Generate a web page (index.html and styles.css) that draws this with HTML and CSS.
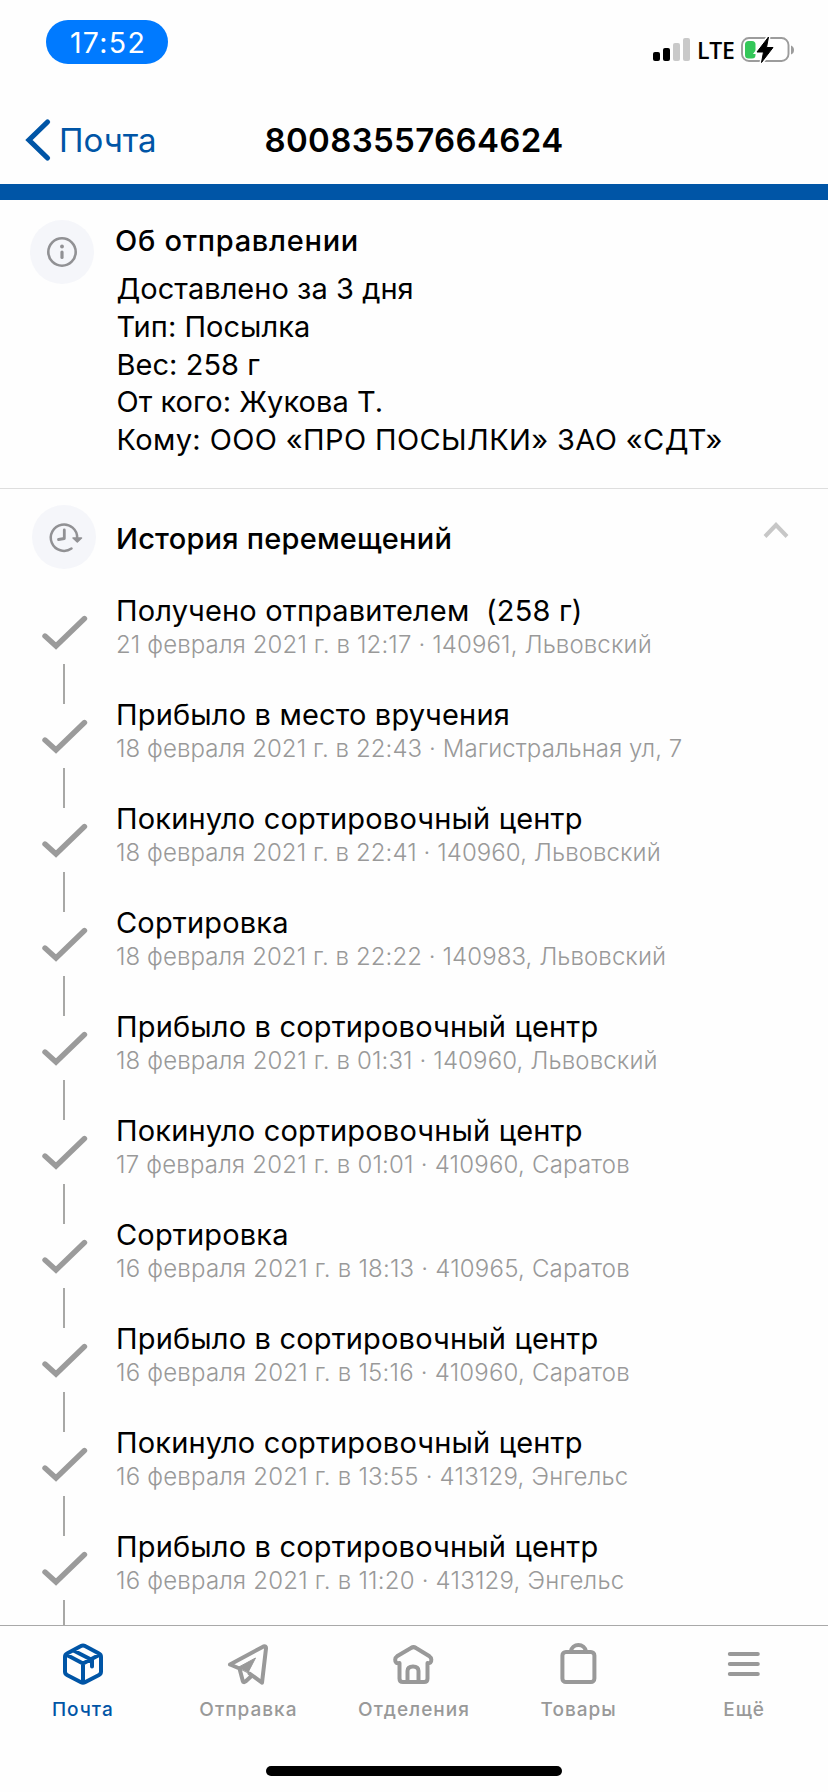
FILE: index.html
```
<!DOCTYPE html>
<html lang="ru">
<head>
<meta charset="utf-8">
<title>80083557664624</title>
<link rel="stylesheet" href="styles.css">
</head>
<body>
<svg class="defs" width="0" height="0">
  <symbol id="step" viewBox="0 0 115 104">
    <path d="M45 36 56 46 84.5 18.5" fill="none" stroke="#9b9b9b" stroke-width="5.400" stroke-linecap="round" stroke-linejoin="miter"/>
    <path d="M64 64V104" fill="none" stroke="#a8a8a6" stroke-width="2"/>
  </symbol>
</svg>
<div class="screen">
  <header class="status">
    <div class="time">17:52</div>
    <div class="indicators">
      <svg class="signal" width="38" height="24" viewBox="0 0 38 24">
        <rect x="0" y="14" width="7" height="9" rx="2"/>
        <rect x="10" y="10" width="7" height="13" rx="2"/>
        <rect x="20" y="5" width="7" height="18" rx="2" fill="#c9c9c9"/>
        <rect x="30" y="0" width="7" height="23" rx="2" fill="#c9c9c9"/>
      </svg>
      <span class="network">LTE</span>
      <svg class="battery" width="54" height="28" viewBox="0 0 54 28">
        <rect x="1" y="2" width="46.500" height="23" rx="7" fill="#fff" stroke="#9c9c9c" stroke-width="1.900"/>
        <path d="M50 9.500Q53 10.500 53 14T50 18.500Z" fill="#9c9c9c"/>
        <rect x="4" y="5" width="10.500" height="17.500" rx="3.500" fill="#34c759"/>
        <path d="M27.500 1 16 16H22.500L20.500 26.500 32 11.500H25.500Z" stroke="#fff" stroke-width="4"/>
        <path d="M27.500 1 16 16H22.500L20.500 26.500 32 11.500H25.500Z" stroke="#000" stroke-width="1" stroke-linejoin="round"/>
      </svg>
    </div>
  </header>
  <nav class="nav">
    <a class="back">
      <svg width="30" height="46" viewBox="0 0 30 46"><path d="M24.500 5 6 23 24.500 41" fill="none" stroke="#0055a6" stroke-width="5.200" stroke-linecap="round" stroke-linejoin="miter"/></svg>
      <span>Почта</span>
    </a>
    <h1 class="title">80083557664624</h1>
  </nav>
  <main class="content">
    <section class="about">
      <div class="badge">
        <svg width="64" height="64" viewBox="0 0 64 64" fill="none" stroke="#919194">
          <circle cx="32" cy="32" r="13.700" stroke-width="2.600"/>
          <path d="M32 32V37.500" stroke-width="3.200" stroke-linecap="round"/>
          <circle cx="32" cy="26.500" r="1.900" fill="#919194" stroke="none"/>
        </svg>
      </div>
      <div class="about-body">
        <h2 class="heading heading-about">Об отправлении</h2>
        <p class="fact">Доставлено за 3 дня</p>
        <p class="fact">Тип: Посылка</p>
        <p class="fact">Вес: 258 г</p>
        <p class="fact">От кого: Жукова Т.</p>
        <p class="fact fact-to">Кому: ООО «ПРО ПОСЫЛКИ» ЗАО «СДТ»</p>
      </div>
    </section>
    <section class="history">
      <div class="history-head">
        <div class="badge badge-history">
          <svg width="64" height="64" viewBox="0 0 64 64" fill="none" stroke="#919194" stroke-width="2.500" stroke-linecap="round" stroke-linejoin="round">
            <path d="M45.200 33A13.200 13.200 0 1 0 39.500 43.500"/>
            <path d="M32.300 25V33.500L26.500 34.500" stroke-width="2.800"/>
            <path d="M41 33 49.500 33 45.300 37Z" fill="#919194" stroke-width="1.500"/>
          </svg>
        </div>
        <h2 class="heading heading-history">История перемещений</h2>
        <svg class="chevron" width="30" height="22" viewBox="0 0 30 22"><path d="M4 16.500 15 5 26 16.500" fill="none" stroke="#c7c7c7" stroke-width="4"/></svg>
      </div>
      <ol class="steps">
        <li class="step"><svg class="rail"><use href="#step"/></svg><div class="info"><p class="name">Получено отправителем&nbsp; (258 г)</p><p class="meta">21 февраля 2021 г. в 12:17 · 140961, Львовский</p></div></li>
        <li class="step"><svg class="rail"><use href="#step"/></svg><div class="info"><p class="name">Прибыло в место вручения</p><p class="meta meta-tight">18 февраля 2021 г. в 22:43 · Магистральная ул, 7</p></div></li>
        <li class="step"><svg class="rail"><use href="#step"/></svg><div class="info"><p class="name">Покинуло сортировочный центр</p><p class="meta meta-tight">18 февраля 2021 г. в 22:41 · 140960, Львовский</p></div></li>
        <li class="step"><svg class="rail"><use href="#step"/></svg><div class="info"><p class="name">Сортировка</p><p class="meta meta-tight">18 февраля 2021 г. в 22:22 · 140983, Львовский</p></div></li>
        <li class="step"><svg class="rail"><use href="#step"/></svg><div class="info"><p class="name">Прибыло в сортировочный центр</p><p class="meta">18 февраля 2021 г. в 01:31 · 140960, Львовский</p></div></li>
        <li class="step"><svg class="rail"><use href="#step"/></svg><div class="info"><p class="name">Покинуло сортировочный центр</p><p class="meta meta-wide">17 февраля 2021 г. в 01:01 · 410960, Саратов</p></div></li>
        <li class="step"><svg class="rail"><use href="#step"/></svg><div class="info"><p class="name">Сортировка</p><p class="meta meta-wide">16 февраля 2021 г. в 18:13 · 410965, Саратов</p></div></li>
        <li class="step"><svg class="rail"><use href="#step"/></svg><div class="info"><p class="name">Прибыло в сортировочный центр</p><p class="meta meta-wide">16 февраля 2021 г. в 15:16 · 410960, Саратов</p></div></li>
        <li class="step"><svg class="rail"><use href="#step"/></svg><div class="info"><p class="name">Покинуло сортировочный центр</p><p class="meta meta-wide">16 февраля 2021 г. в 13:55 · 413129, Энгельс</p></div></li>
        <li class="step"><svg class="rail"><use href="#step"/></svg><div class="info"><p class="name">Прибыло в сортировочный центр</p><p class="meta meta-wide">16 февраля 2021 г. в 11:20 · 413129, Энгельс</p></div></li>
      </ol>
    </section>
  </main>
  <footer class="tabs">
    <a class="tab tab-active">
      <svg class="tab-icon" viewBox="0 0 60 60"><path d="M28 12 14 19.500Q12 20.500 12 23V37.500Q12 40 14 41L28 48.200Q30 49.300 32 48.200L46 41Q48 40 48 37.500V23Q48 20.500 46 19.500L32 12Q30 10.800 28 12ZM13 20.500 30 29.500 47 20.500M30 29.500V48M20.500 16.500 39 26V32.500"/></svg>
      <span>Почта</span>
    </a>
    <a class="tab">
      <svg class="tab-icon" viewBox="0 0 60 60"><path d="M12 30.500 45.500 12.500Q48.200 11.500 48 14.500L44 48.700 31.500 39.500M12 30.500 21.500 34.500 24.800 47Q25.500 49 27.500 47.500L33.500 42"/><path d="M20 33.500 37.500 24 30 38.500Z" fill="currentColor" stroke-width="1"/></svg>
      <span>Отправка</span>
    </a>
    <a class="tab">
      <svg class="tab-icon" viewBox="0 0 60 60"><path d="M15.500 29V44.500Q15.500 48 19 48H40Q43.500 48 43.500 44.500V29M15.500 29Q11 30 11.200 25.500 11.200 23.500 13 22.300L27 14Q29.500 12.300 32 14L45.500 22.300Q47.300 23.500 47.300 25.500 47.500 30 43.500 29M23.500 47V37Q23.500 32.500 29 32.500T34.500 37V47"/></svg>
      <span>Отделения</span>
    </a>
    <a class="tab">
      <svg class="tab-icon" viewBox="0 0 60 60"><rect x="12.400" y="18" width="32" height="30" rx="3.500"/><path d="M20.800 17.500A7.700 7.700 0 0 1 36 17.500"/></svg>
      <span class="nudge">Товары</span>
    </a>
    <a class="tab">
      <svg class="tab-icon" viewBox="0 0 60 60"><path d="M14.800 20H42.800M14.800 30H42.800M14.800 40H42.800"/></svg>
      <span class="nudge">Ещё</span>
    </a>
  </footer>
  <div class="home"><div class="home-bar"></div></div>
</div>
</body>
</html>
```
FILE: styles.css
```
* { box-sizing: border-box; margin: 0; padding: 0; }
body { background: #fefefe; color: #000; font-family: Inter, "Noto Sans", sans-serif; }
.defs { display: block; }
.screen { width: 828px; height: 1792px; display: flex; flex-direction: column; overflow: hidden; }

.status { height: 90px; flex: none; display: flex; justify-content: space-between; align-items: flex-start; padding: 20px 33px 0 46px; }
.time { width: 122px; height: 44px; border-radius: 22px; background: #007aff; color: #fff; font-size: 28.5px; font-weight: 400; line-height: 45px; letter-spacing: 1.3px; text-align: center; padding-left: 2px; }
.indicators { display: flex; align-items: flex-start; padding-top: 16px; }
.signal { margin-top: 2px; }
.network { width: 50px; padding-left: 6px; font-family: "Open Sans", "Noto Sans", sans-serif; font-size: 23px; font-weight: 600; line-height: 29px; letter-spacing: -.3px; }
.battery { flex: none; }

.nav { height: 110px; flex: none; display: grid; grid-template-columns: 228px 1fr 228px; padding-top: 27px; border-bottom: 16px solid #0055a6; line-height: 46px; font-size: 33px; }
.back { display: flex; align-items: flex-start; padding-left: 23px; gap: 6px; color: #0055a6; }
.title { font-size: 33px; font-weight: 600; letter-spacing: .35px; text-align: center; }

.content { flex: 1; min-height: 0; overflow: hidden; }
.about { height: 289px; display: flex; padding: 20px 0 0 30px; border-bottom: 1px solid #dedede; }
.badge { width: 64px; height: 64px; flex: none; border-radius: 50%; background: #f5f6fa; }
.about-body { padding: 2px 0 0 21px; }
.heading { font-size: 29px; line-height: 38px; font-weight: 600; white-space: nowrap; }
.heading-about { font-weight: 550; letter-spacing: .72px; margin-bottom: 10px; }
.fact { font-size: 29px; line-height: 37.75px; letter-spacing: .04px; white-space: nowrap; padding-left: 1.5px; }
.fact-to { letter-spacing: .38px; }

.history { padding-top: 16px; }
.history-head { height: 95px; display: flex; padding-left: 32px; }
.heading-history { flex: 1; padding: 15px 0 0 20px; font-weight: 550; letter-spacing: .22px; }
.chevron { margin: 15px 37px 0 0; }
.steps { list-style: none; }
.step { height: 104px; display: flex; }
.rail { width: 115px; height: 104px; flex: none; }
.info { margin-top: -7px; white-space: nowrap; }
.name { font-size: 29px; line-height: 36px; letter-spacing: .17px; padding-left: 1px; }
.meta { font-size: 24px; font-weight: 300; line-height: 32px; letter-spacing: .13px; color: #999; padding-left: 1px; }
.meta-tight { letter-spacing: .08px; }
.meta-wide { letter-spacing: .21px; }

.tabs { height: 101px; flex: none; display: grid; grid-template-columns: repeat(5, 1fr); border-top: 1px solid #a9a9a9; }
.tab { display: flex; flex-direction: column; align-items: center; gap: 4px; padding-top: 8px; color: #999; font-size: 19px; font-weight: 500; line-height: 24px; letter-spacing: 1px; }
.tab-active { color: #0055a6; }
.tab-icon { width: 60px; height: 60px; fill: none; stroke: currentColor; stroke-width: 4; stroke-linecap: round; stroke-linejoin: round; }
.nudge { padding-right: 2px; }
.home { height: 66px; flex: none; display: flex; justify-content: center; padding-top: 40px; }
.home-bar { width: 296px; height: 10px; border-radius: 5px; background: #000; }
```
